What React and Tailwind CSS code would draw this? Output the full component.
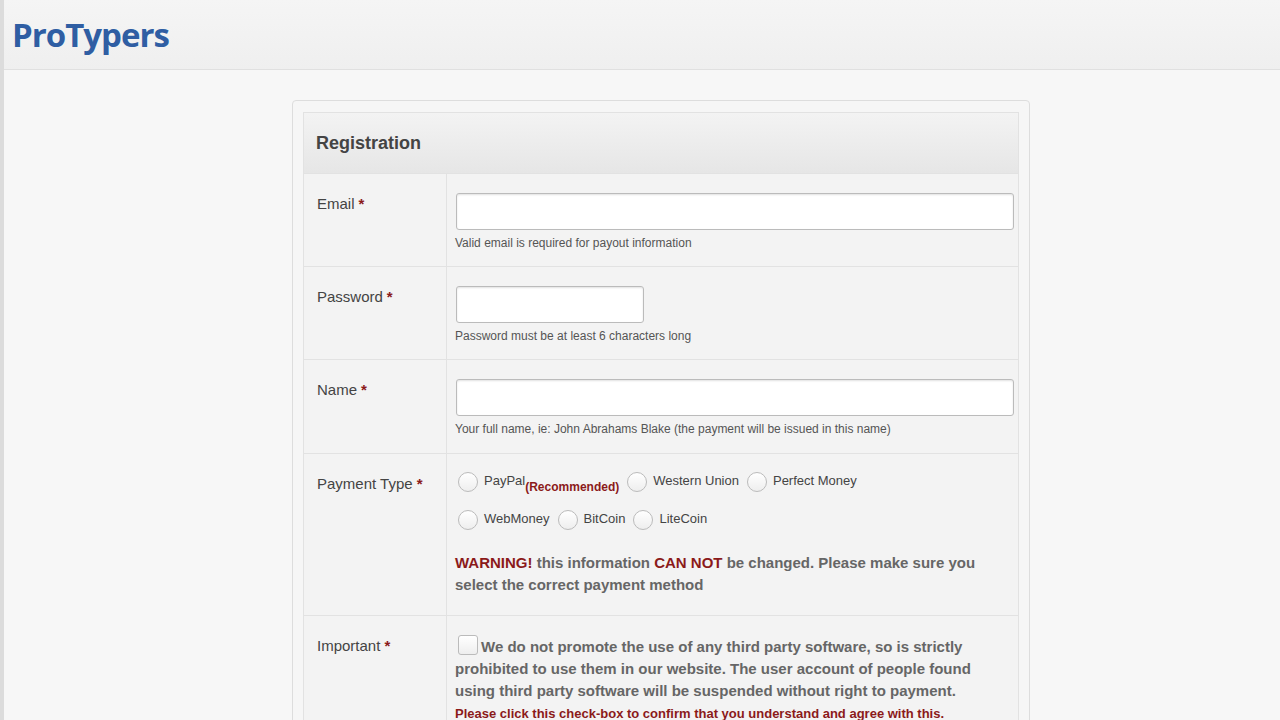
import React from 'react'

const Star = () => <span className="text-[#8b1a1a] text-[15px] font-bold ml-1">*</span>

const Row = ({ label, children, className = '' }) => (
  <div className={`flex border-t border-[#e2e2e2] ${className}`}>
    <div className="w-[143px] shrink-0 border-r border-[#e2e2e2] pl-[13px] pt-[19px] text-[15px] text-[#444]">
      {label}
      <Star />
    </div>
    <div className="flex-1 pl-[8px] pr-[5px] pt-[19px] pb-[12px]">{children}</div>
  </div>
)

const Radio = ({ children }) => (
  <label className="flex items-start gap-[6px] mr-[8px]">
    <span className="w-[20px] h-[20px] rounded-full border border-[#bbb] bg-gradient-to-b from-white to-[#eee] mt-[1px] shrink-0" />
    <span className="text-[13px] text-[#444]">{children}</span>
  </label>
)

const inputCls =
  'block h-[37px] rounded-[3px] border border-[#bbb] bg-white shadow-[inset_0_1px_2px_rgba(0,0,0,0.12)] ml-[1px]'

export default function App() {
  return (
    <div className="min-h-screen bg-[#f7f7f7] border-l-[4px] border-[#dcdcdc]" style={{ fontFamily: '"Liberation Sans", Arial, sans-serif' }}>
      <div className="h-[70px] bg-gradient-to-b from-[#f5f5f5] to-[#efefef] border-b border-[#e0e0e0] flex items-center pl-[8px]">
        <span className="text-[33px] font-bold text-[#2f5ea3] tracking-[-1px]" style={{ fontFamily: '"Open Sans", sans-serif' }}>ProTypers</span>
      </div>
      <div className="pt-[30px] pl-[288px]">
        <div className="w-[738px] border border-[#ddd] rounded-[4px] bg-[#f6f6f6] px-[10px] pt-[11px]">
          <div className="border border-[#e2e2e2] bg-[#f3f3f3]">
            <div className="h-[60px] flex items-center pl-[12px] bg-gradient-to-b from-[#f3f3f3] to-[#e6e6e6] text-[18px] font-bold text-[#444]">
              Registration
            </div>
            <Row label="Email" className="h-[93px]">
              <input className={`${inputCls} w-[558px]`} />
              <p className="text-[12px] text-[#555] mt-[4px]">Valid email is required for payout information</p>
            </Row>
            <Row label="Password" className="h-[93px]">
              <input type="password" className={`${inputCls} w-[188px]`} />
              <p className="text-[12px] text-[#555] mt-[4px]">Password must be at least 6 characters long</p>
            </Row>
            <Row label="Name" className="h-[94px]">
              <input className={`${inputCls} w-[558px]`} />
              <p className="text-[12px] text-[#555] mt-[4px]">Your full name, ie: John Abrahams Blake (the payment will be issued in this name)</p>
            </Row>
            <Row label="Payment Type" className="h-[162px]">
              <div className="flex pl-[3px] -mt-[2px]">
                <Radio>
                  PayPal<span className="text-[#8b1a1a] font-bold text-[12px] relative top-[6px]">(Recommended)</span>
                </Radio>
                <Radio>Western Union</Radio>
                <Radio>Perfect Money</Radio>
              </div>
              <div className="flex pl-[3px] mt-[17px]">
                <Radio>WebMoney</Radio>
                <Radio>BitCoin</Radio>
                <Radio>LiteCoin</Radio>
              </div>
              <p className="mt-[22px] text-[15px] font-bold text-[#666] leading-[22px] pr-[30px]">
                <span className="text-[#8b1a1a]">WARNING!</span> this information <span className="text-[#8b1a1a]">CAN NOT</span> be changed. Please make sure you select the correct payment method
              </p>
            </Row>
            <Row label="Important" className="h-[120px]">
              <p className="text-[15px] font-bold text-[#666] leading-[22px] pr-[30px]">
                <span className="inline-block w-[20px] h-[20px] border border-[#bbb] rounded-[3px] bg-gradient-to-b from-white to-[#eee] align-[-3px] mx-[3px]" />
                We do not promote the use of any third party software, so is strictly prohibited to use them in our website. The user account of people found using third party software will be suspended without right to payment.{' '}
                <span className="text-[#8b1a1a] text-[13px]">Please click this check-box to confirm that you understand and agree with this.</span>
              </p>
            </Row>
          </div>
        </div>
      </div>
    </div>
  )
}
